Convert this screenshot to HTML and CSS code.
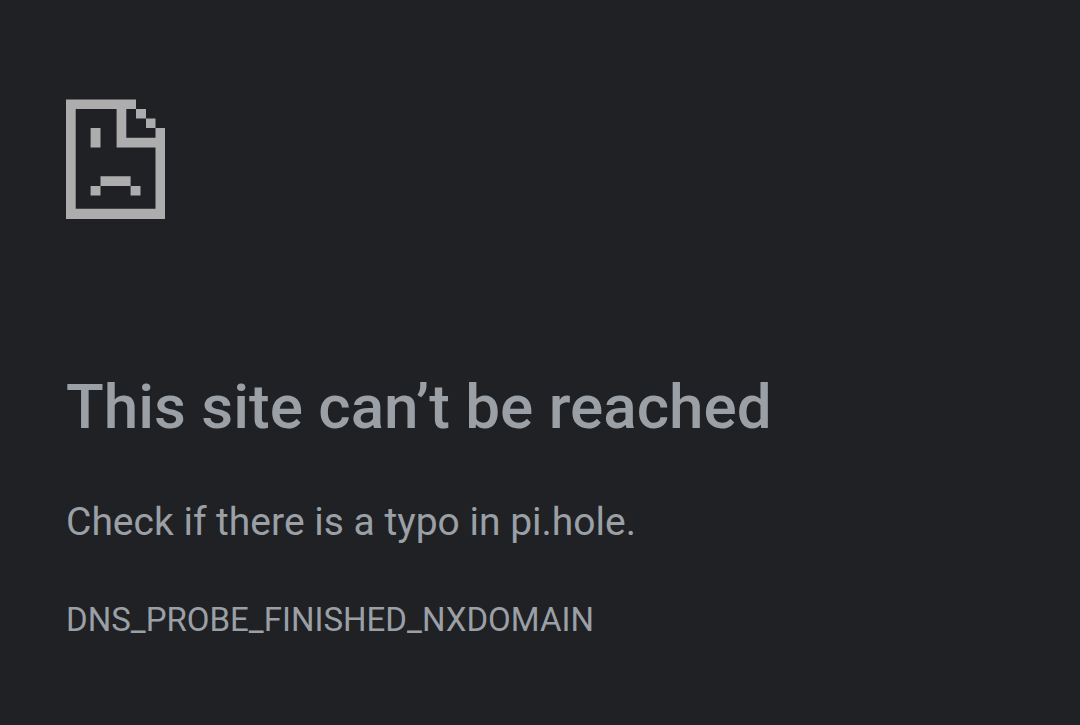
FILE: index.html
```html
<!DOCTYPE html>
<html lang="en">
<head>
    <meta charset="UTF-8">
    <meta name="viewport" content="width=device-width, initial-scale=1.0">
    <title>pi.hole</title>
    <link rel="stylesheet" href="styles.css">
</head>
<body>
    <main class="error-page">
        <svg class="icon" viewBox="0 0 99 120" aria-hidden="true">
            <!-- page outline -->
            <path d="M0 0.4H70V10H60.3V38.8H89.5V29H99V120H0ZM9.7 10V109.7H89.5V48.4H50.6V10Z" fill-rule="evenodd"/>
            <!-- folded corner -->
            <path d="M70 10H80V19.5H70ZM80 19.5H89.5V29H80Z"/>
            <!-- face -->
            <path d="M24.6 29H34.5V48.4H24.6ZM34.5 77.3H64.6V87H34.5ZM24.6 87H34.5V96.5H24.6ZM64.6 87H74.5V96.5H64.6Z"/>
        </svg>
        <h1>This site can’t be reached</h1>
        <p class="message">Check if there is a typo in pi.hole.</p>
        <p class="error-code">DNS_PROBE_FINISHED_NXDOMAIN</p>
    </main>
</body>
</html>
```
FILE: styles.css
```css
* {
    margin: 0;
    padding: 0;
    box-sizing: border-box;
}

body {
    background-color: #202124;
    color: #9aa0a6;
    font-family: Roboto, sans-serif;
}

.error-page {
    padding: 99px 66px 0;
}

.icon {
    display: block;
    width: 99px;
    height: 120px;
    fill: #adadad;
}

h1 {
    margin-top: 151px;
    font-size: 62px;
    font-weight: 500;
    line-height: 74px;
}

.message {
    margin-top: 48px;
    font-size: 39px;
    line-height: 60px;
}

.error-code {
    margin-top: 43px;
    font-size: 33px;
    line-height: 50px;
}
```
